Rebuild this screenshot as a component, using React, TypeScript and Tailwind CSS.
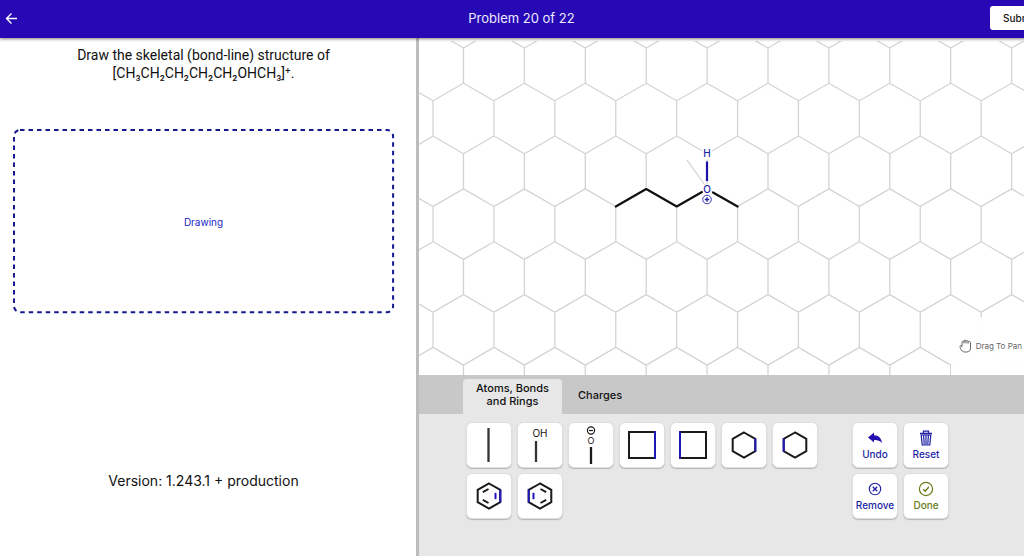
import type { ReactNode } from "react";

const STEP = 60.9;
const PERIOD = 105.7;

function HexGrid() {
  const parts: string[] = [];
  for (let r = -1; r < 8; r++) {
    for (let c = -1; c < 28; c++) {
      const x = 44.5 + c * STEP;
      const y = 10 + r * PERIOD;
      const bx = x - STEP / 2;
      const by = y + 52.8;
      const nx = x + STEP / 2;
      parts.push(
        `M${x} ${y}V${y + 35.2}L${bx} ${by}V${by + 35.2}L${x} ${y + PERIOD}`,
        `M${x} ${y + 35.2}L${nx} ${by}`,
        `M${nx} ${by + 35.2}L${x} ${y + PERIOD}`
      );
    }
  }
  return <path d={parts.join("")} fill="none" stroke="#d3d3d3" strokeWidth="1.3" />;
}

function Canvas() {
  return (
    <svg className="absolute inset-0 h-full w-full" role="img" aria-label="Molecule canvas">
      <HexGrid />
      <rect x="0" y="0" width="100%" height="3" fill="#fff" />
      <path d="M268 122L288 150" stroke="#d0d0d0" strokeWidth="1.2" />
      <circle cx="288" cy="116" r="6" fill="#fff" />
      <path
        d="M196.8 168.5L227.2 151L257.7 168.5L283 154M294 154.5L318.6 168.5"
        fill="none"
        stroke="#111"
        strokeWidth="2.2"
        strokeLinecap="round"
        strokeLinejoin="round"
      />
      <circle cx="288" cy="151" r="5" fill="#fff" />
      <path d="M288 123.5V143" stroke="#1d12a8" strokeWidth="2.2" />
      <g fill="#1d1fa5" className="font-['Inter',sans-serif] text-[10px] font-medium" textAnchor="middle">
        <text x="288" y="119">H</text>
        <text x="288" y="154.500">O</text>
      </g>
      <g fill="none" stroke="#1d1fa5">
        <circle cx="288" cy="161.500" r="4.300" strokeWidth="0.900" />
        <path d="M285.800 161.500H290.200M288 159.300V163.700" strokeWidth="1.300" />
      </g>
    </svg>
  );
}

function Tile({ label, children, className = "" }: { label: string; children: ReactNode; className?: string }) {
  return (
    <button
      type="button"
      aria-label={label}
      className={`flex h-[46px] w-[46px] flex-col items-center justify-center rounded-md border border-[#dedede] bg-white shadow-[0_1px_1px_#b5b5b5] ${className}`}
    >
      {children}
    </button>
  );
}

function Glyph({ children }: { children: ReactNode }) {
  return (
    <svg width="44" height="44" viewBox="0 0 44 44" fill="none" stroke="#1a1a1a" strokeWidth="2" className="shrink-0" aria-hidden="true">
      {children}
    </svg>
  );
}

const BLUE = "#2018b4";

function Square({ left = false }: { left?: boolean }) {
  return (
    <Glyph>
      <path d="M9 9H35V35H9Z" />
      <path d={left ? "M9 8V36" : "M35 8V36"} stroke={BLUE} />
    </Glyph>
  );
}

function Hexagon({ left = false, aromatic = false }: { left?: boolean; aromatic?: boolean }) {
  return (
    <Glyph>
      <g transform={left ? "translate(44 0) scale(-1 1)" : undefined}>
        <path d="M22 9.500L33.300 15.800V28.200L22 34.500L10.700 28.200V15.800Z" />
        <path d="M33.300 15.500V28.500" stroke={BLUE} />
        {aromatic && (
          <>
            <path d="M15.800 18.200L21.500 15M15.800 25.800L21.500 29" />
            <path d="M28.500 18.800V25.200" stroke={BLUE} />
          </>
        )}
      </g>
    </Glyph>
  );
}

function Tools() {
  return (
    <div className="grid grid-cols-[repeat(7,46px)] content-start gap-[5px]">
      <Tile label="Single bond">
        <Glyph><path d="M21.500 5V39" stroke="#333" strokeWidth="2.300" /></Glyph>
      </Tile>
      <Tile label="Hydroxyl group">
        <Glyph>
          <path d="M18 18V39" stroke="#333" strokeWidth="2.300" />
          <text x="22" y="14" fill="#111" stroke="none" className="text-[10px]" textAnchor="middle">OH</text>
        </Glyph>
      </Tile>
      <Tile label="Negative oxygen">
        <Glyph>
          <circle cx="22" cy="7.500" r="3.600" strokeWidth="1.200" />
          <path d="M20 7.500H24" strokeWidth="1.200" />
          <text x="22" y="20.500" fill="#111" stroke="none" className="text-[9px]" textAnchor="middle">O</text>
          <path d="M22 24V41" strokeWidth="2.300" />
        </Glyph>
      </Tile>
      <Tile label="Square ring, right bond"><Square /></Tile>
      <Tile label="Square ring, left bond"><Square left /></Tile>
      <Tile label="Hexagon ring, right bond"><Hexagon /></Tile>
      <Tile label="Hexagon ring, left bond"><Hexagon left /></Tile>
      <Tile label="Benzene ring, right bond"><Hexagon aromatic /></Tile>
      <Tile label="Benzene ring, left bond"><Hexagon left aromatic /></Tile>
    </div>
  );
}

function Actions() {
  const text = "text-[10px] leading-3 font-medium";
  return (
    <div className="grid grid-cols-[repeat(2,46px)] content-start gap-[5px]">
      <Tile label="Undo" className="gap-[2px] text-[#1d1fa5]">
        <svg width="16" height="16" viewBox="0 0 16 16" aria-hidden="true">
          <path d="M1 7.500L7 2.500V5.200C11.500 5.200 14.500 8 15 13C12.800 10.500 10.500 9.900 7 10V12.500Z" fill="#2510b4" />
        </svg>
        <span className={text}>Undo</span>
      </Tile>
      <Tile label="Reset" className="gap-[2px] text-[#1d1fa5]">
        <svg width="16" height="16" viewBox="0 0 16 16" fill="none" stroke="currentColor" aria-hidden="true">
          <path d="M2 3.500H14M5.500 3V1.200H10.500V3" strokeWidth="1.300" />
          <path d="M3.200 5H12.800L11.800 15H4.200Z" strokeWidth="1.200" />
          <path d="M5.600 5L6.200 14.500M8 5V14.500M10.400 5L9.800 14.500" strokeWidth="1.200" />
        </svg>
        <span className={text}>Reset</span>
      </Tile>
      <Tile label="Remove" className="gap-[2px] text-[#1d1fa5]">
        <svg width="16" height="16" viewBox="0 0 16 16" fill="none" stroke="currentColor" strokeWidth="1.100" aria-hidden="true">
          <circle cx="8" cy="8" r="5.700" />
          <path d="M5.800 5.800L10.200 10.200M10.200 5.800L5.800 10.200" strokeWidth="1.300" />
        </svg>
        <span className={text}>Remove</span>
      </Tile>
      <Tile label="Done" className="gap-[2px] text-[#687b14]">
        <svg width="16" height="16" viewBox="0 0 16 16" fill="none" stroke="currentColor" strokeWidth="1.200" aria-hidden="true">
          <circle cx="8" cy="8" r="6.600" />
          <path d="M5.200 8.200L7.200 10.200L10.800 6" strokeWidth="1.400" />
        </svg>
        <span className={text}>Done</span>
      </Tile>
    </div>
  );
}

export default function App() {
  return (
    <div className="flex min-h-screen flex-col overflow-hidden bg-white font-['Inter',sans-serif] text-[#111]">
      <header className="relative z-10 -mr-[19px] grid h-[38px] grid-cols-[1fr_auto_1fr] items-center bg-[#2609b5] pb-[2px] shadow-[0_1px_3px_rgba(0,0,0,0.5)]">
        <button type="button" aria-label="Back" className="ml-[5px] justify-self-start text-white">
          <svg width="13" height="13" viewBox="0 0 13 13" fill="none" stroke="currentColor" strokeWidth="1.400" aria-hidden="true">
            <path d="M12 6.500H1.500M6.500 1.500L1.500 6.500L6.500 11.500" />
          </svg>
        </button>
        <h1 className="text-[13px] leading-5 text-[#eeeaff]">Problem 20 of 22</h1>
        <button type="button" className="h-6 w-[53px] justify-self-end rounded-[3px] bg-white pl-[13px] text-left text-[10px] font-medium whitespace-nowrap">
          Submit
        </button>
      </header>

      <main className="grid flex-1 grid-cols-[419fr_605fr]">
        <section className="flex flex-col items-center border-r-[3px] border-[#bdbdbd] pr-[22px] pl-[13px] text-center">
          <p className="mt-2 font-['Roboto','Inter',sans-serif] text-[14px] leading-[18px]">
            Draw the skeletal (bond-line) structure of
            <br />
            [CH₃CH₂CH₂CH₂CH₂OHCH₃]⁺.
          </p>
          <button type="button" className="relative mt-[47px] flex h-[184px] w-full items-center justify-center pt-[2px] text-[10px] text-[#1d1fc5]">
            <svg className="absolute inset-0 h-full w-full overflow-visible" aria-hidden="true">
              <rect x="1" y="1" width="99.5%" height="99%" rx="6" fill="none" stroke="#15198c" strokeWidth="2" strokeDasharray="4.500 4" />
            </svg>
            Drawing
          </button>
          <p className="mt-auto mb-[66px] text-[14px] leading-[18px]">Version: 1.243.1 + production</p>
        </section>

        <section className="flex min-w-0 flex-col">
          <div className="relative min-h-[337px] flex-1 overflow-hidden">
            <Canvas />
            <div className="absolute right-0 bottom-0 flex h-[58px] items-center gap-1 bg-white/95 pr-[2px] pl-2 text-[8px] text-[#666]">
              <svg width="13" height="14" viewBox="0 0 13 14" fill="none" stroke="#666" strokeWidth="1" strokeLinejoin="round" strokeLinecap="round" aria-hidden="true">
                <path d="M3 7V3.200C3 1.800 5 1.800 5 3V4M5 3V2C5 0.800 7 0.800 7 2V4M7 2.500C7 1.200 9 1.200 9 2.500V4.200M9 3.200C9 2 11.500 2 11.500 3.500V9C11.500 11.500 10 13 7.500 13H6C3.500 13 2.500 11.500 1.500 9.500L1 7.500C0.800 6.200 2.300 6 3 7.500" />
              </svg>
              <span>Drag To Pan</span>
            </div>
          </div>
          <div role="tablist" className="flex h-[39px] bg-[#c8c8c8] pt-1 pl-11 text-[11px] leading-[13px] font-medium">
            <button type="button" role="tab" aria-selected="true" className="w-[99px] rounded-t bg-[#e7e7e7] pb-1">
              Atoms, Bonds
              <br />
              and Rings
            </button>
            <button type="button" role="tab" aria-selected="false" className="px-4 pb-[3px]">
              Charges
            </button>
          </div>
          <div className="flex h-[142px] gap-[34px] bg-[#e7e7e7] pt-2 pl-[47px]">
            <Tools />
            <Actions />
          </div>
        </section>
      </main>
    </div>
  );
}
